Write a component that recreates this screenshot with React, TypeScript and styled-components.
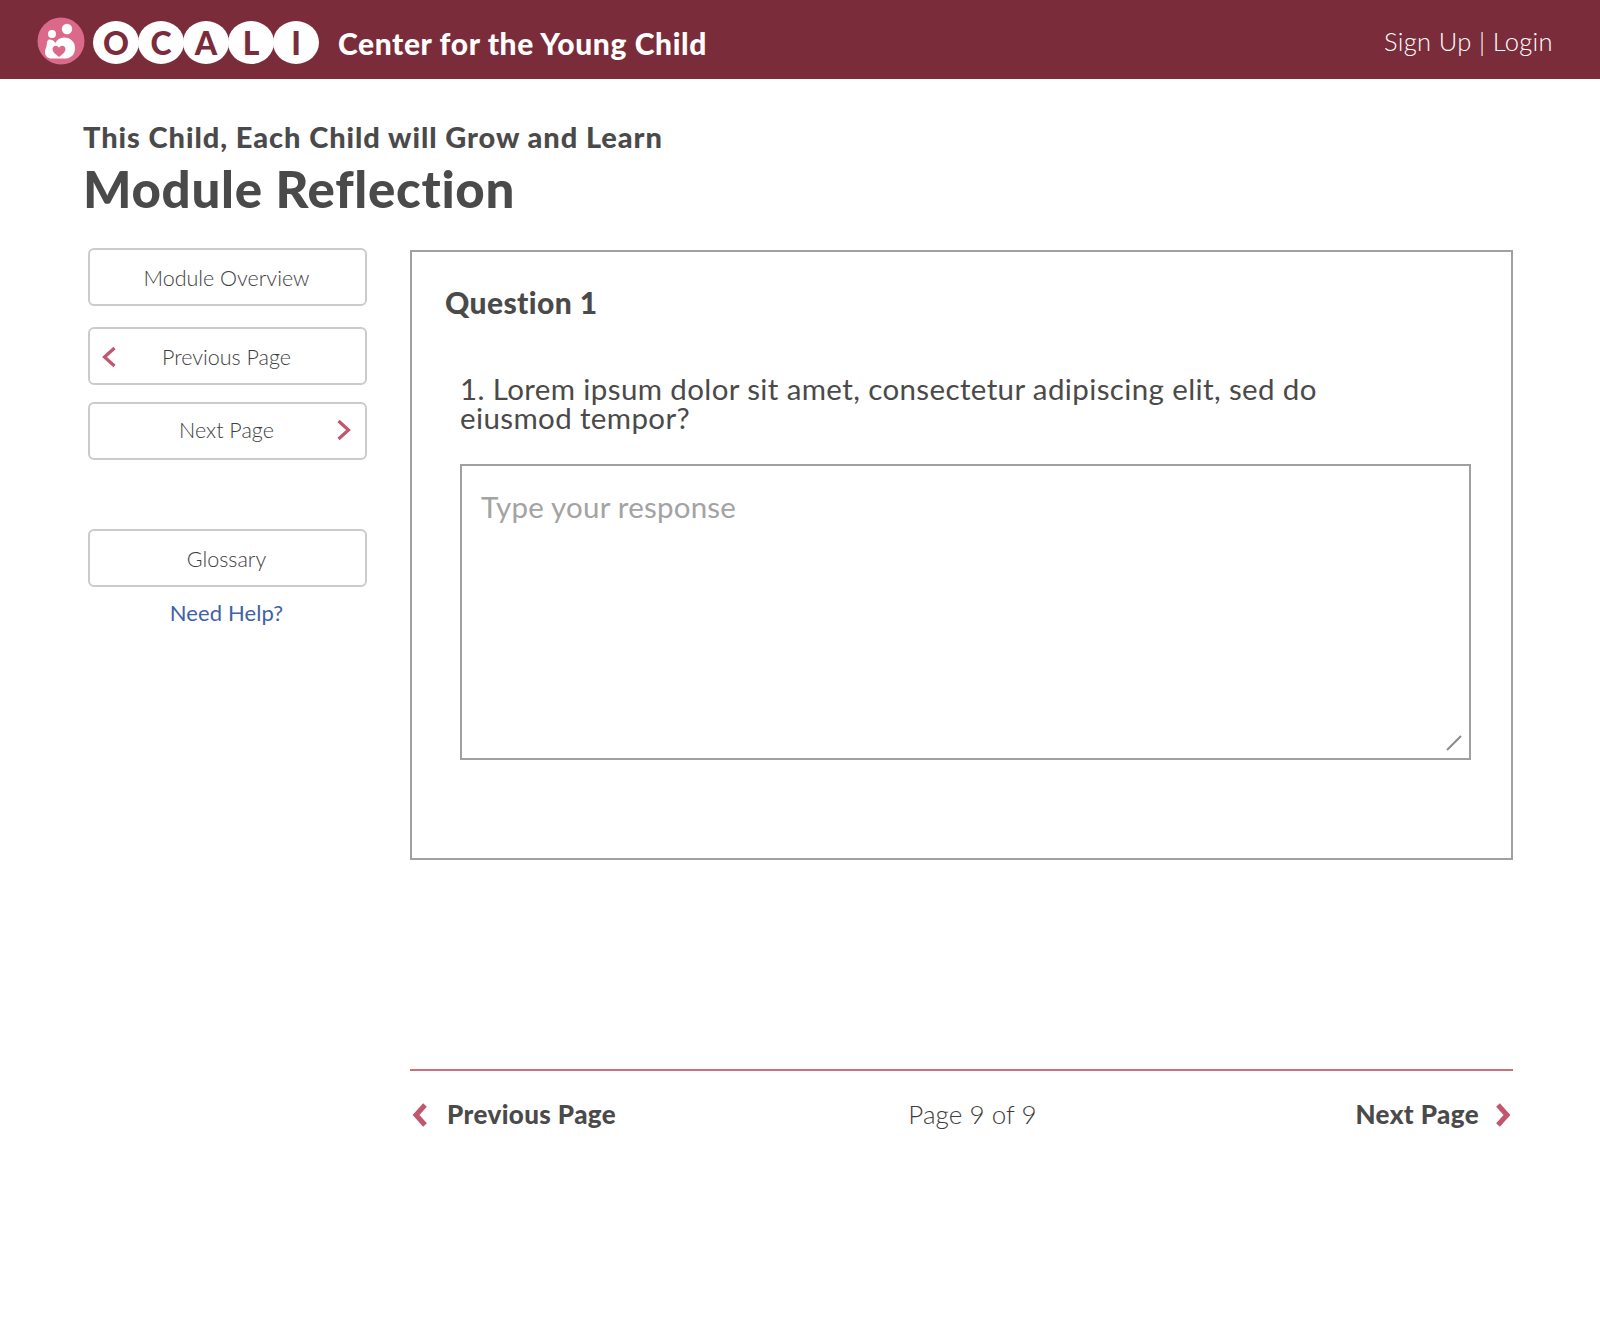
import React from 'react';
import styled, { createGlobalStyle } from 'styled-components';

const LETTERS = ['O', 'C', 'A', 'L', 'I'];
const FONT = 'Lato, "Open Sans", sans-serif';

const GlobalStyle = createGlobalStyle`
  html, body {
    margin: 0;
    padding: 0;
    background: #fff;
    font-family: ${FONT};
    font-variant-ligatures: none;
    color: #4a4a4a;
  }
`;

const Page = styled.div`
  width: 1600px;
  height: 1331px;
  overflow: hidden;
`;

const Header = styled.header`
  height: 79px;
  background: #7b2c3a;
  display: flex;
  align-items: center;
  padding: 0 47px 0 37px;
  color: #fff;
`;

const LogoBadge = styled.svg`
  width: 48px;
  height: 48px;
  margin: 3px 8px 0 0;
  flex: none;
`;

const LogoLetters = styled.div`
  display: flex;
  margin: 5px 19px 0 0;
`;

const LogoLetter = styled.span`
  width: 46px;
  height: 43px;
  border-radius: 50%;
  background: #fff;
  color: #7b2c3a;
  font-size: 32px;
  line-height: 43px;
  font-weight: 900;
  text-align: center;
  flex: none;
  & + & {
    margin-left: -1px;
  }
`;

const HeaderTitle = styled.div`
  font-size: 30px;
  font-weight: 900;
  letter-spacing: 0.6px;
  margin-top: 6px;
  flex: 1;
`;

const HeaderLinks = styled.div`
  font-size: 25.5px;
  font-weight: 300;
  letter-spacing: 0.35px;
  margin-top: 2px;
`;

const Titles = styled.div`
  padding: 40px 0 0 83px;
`;

const Eyebrow = styled.h2`
  margin: 0;
  font-size: 29px;
  line-height: 36px;
  font-weight: 900;
  letter-spacing: 0.92px;
  color: #4a4a4a;
`;

const PageTitle = styled.h1`
  margin: 2px 0 0;
  font-size: 51px;
  line-height: 64px;
  font-weight: 900;
  letter-spacing: 0.7px;
  color: #4a4a4a;
`;

const Body = styled.div`
  display: grid;
  grid-template-columns: 279px 1103px;
  column-gap: 43px;
  padding: 27px 0 0 88px;
`;

const Sidebar = styled.nav`
  display: flex;
  flex-direction: column;
`;

const SideButton = styled.a<{ $gap?: number; $lift?: boolean }>`
  position: relative;
  height: 58px;
  box-sizing: border-box;
  margin-top: ${(p) => p.$gap ?? 0}px;
  padding: 2px 2px ${(p) => (p.$lift ? 4 : 0)}px 0;
  border: 2px solid #cbcbcb;
  border-radius: 6px;
  display: flex;
  align-items: center;
  justify-content: center;
  font-size: 21.5px;
  font-weight: 300;
  letter-spacing: 0;
  color: #3d3d3d;
`;

const SideChevron = styled.svg<{ $side: 'left' | 'right' }>`
  position: absolute;
  ${(p) => (p.$side === 'left' ? 'top: 17px; left: 11px;' : 'top: 15px; right: 13px;')}
  width: 16px;
  height: 22px;
`;

const HelpLink = styled.a`
  margin-top: 12px;
  padding-right: 2px;
  text-align: center;
  font-size: 22px;
  font-weight: 400;
  letter-spacing: 0.1px;
  color: #3f62a6;
`;

const Content = styled.main`
  padding-top: 2px;
`;

const Panel = styled.section`
  height: 610px;
  box-sizing: border-box;
  border: 2px solid #a0a0a0;
  padding: 32px 40px 0 33px;
`;

const QuestionTitle = styled.h3`
  margin: 0;
  font-size: 30px;
  line-height: 36px;
  font-weight: 900;
  letter-spacing: 0.4px;
  color: #4a4a4a;
`;

const QuestionText = styled.p`
  margin: 54px 0 0 15px;
  font-size: 29.5px;
  line-height: 29px;
  font-weight: 400;
  letter-spacing: 0.38px;
  color: #4a4a4a;
`;

const ResponseBox = styled.div`
  position: relative;
  height: 296px;
  box-sizing: border-box;
  margin: 32px 0 0 15px;
  border: 2px solid #a0a0a0;
  padding: 23px 19px;
  font-size: 29.5px;
  line-height: 36px;
  font-weight: 400;
  letter-spacing: 0.22px;
  color: #a3a3a3;
`;

const ResizeGrip = styled.svg`
  position: absolute;
  right: 7px;
  bottom: 7px;
  width: 16px;
  height: 16px;
`;

const Pager = styled.div`
  margin-top: 209px;
  border-top: 2px solid #cb6f7e;
  padding-top: 25px;
  display: grid;
  grid-template-columns: 1fr auto 1fr;
  align-items: center;
`;

const PagerLink = styled.a<{ $end?: boolean }>`
  display: flex;
  align-items: center;
  justify-content: ${(p) => (p.$end ? 'flex-end' : 'flex-start')};
  gap: ${(p) => (p.$end ? 14 : 17)}px;
  font-size: 26px;
  line-height: 36px;
  font-weight: 900;
  letter-spacing: 0.4px;
  color: #4a4a4a;
`;

const PagerChevron = styled.svg`
  width: 20px;
  height: 26px;
  flex: none;
  margin-top: 2px;
`;

const PageCount = styled.div`
  font-size: 26px;
  font-weight: 300;
  letter-spacing: 0.05px;
  color: #3d3d3d;
  margin-left: 22px;
`;

function LogoMark() {
  return (
    <LogoBadge viewBox="0 0 48 48">
      <circle cx="24" cy="24" r="23.5" fill="#db6a8a" />
      <circle cx="30" cy="12" r="5.2" fill="#fff" />
      <circle cx="15" cy="17" r="4" fill="#fff" />
      <path d="M12 22.5c3 0 5 1.2 6.4 3.4 1.6-3.2 4.8-5.4 8.6-5.4 6.6 0 11 4.4 11 10.5 0 6.2-3.6 10-9 10.5H15c-4.4 0-7-2.4-7-6.5 0-2.8 1.4-4.4 1.6-6.2.2-2 .6-6.3 2.4-6.3Z" fill="#fff" />
      <path d="M22 40c-4-2.9-6.5-5-6.5-7.9 0-2 1.5-3.4 3.3-3.4 1.4 0 2.5.9 3.2 2.1.7-1.2 1.8-2.1 3.2-2.1 1.8 0 3.3 1.4 3.3 3.4 0 2.9-2.5 5-6.5 7.9Z" fill="#db6a8a" />
    </LogoBadge>
  );
}

function SideChevronIcon({ side }: { side: 'left' | 'right' }) {
  return (
    <SideChevron $side={side} viewBox="0 0 16 22">
      <path
        d={side === 'left' ? 'M13.5 2 3.5 11l10 9' : 'M2.5 2l10 9-10 9'}
        fill="none"
        stroke="#c1566c"
        strokeWidth="3.2"
      />
    </SideChevron>
  );
}

function PagerChevronIcon({ side }: { side: 'left' | 'right' }) {
  return (
    <PagerChevron viewBox="0 0 20 26">
      <path
        d={side === 'left' ? 'M15 3 6 13l9 10' : 'M5 3l9 10-9 10'}
        fill="none"
        stroke="#c1566c"
        strokeWidth="5"
      />
    </PagerChevron>
  );
}

export default function App() {
  return (
    <Page>
      <GlobalStyle />
      <Header>
        <LogoMark />
        <LogoLetters>
          {LETTERS.map((letter) => (
            <LogoLetter key={letter}>{letter}</LogoLetter>
          ))}
        </LogoLetters>
        <HeaderTitle>Center for the Young Child</HeaderTitle>
        <HeaderLinks>Sign Up | Login</HeaderLinks>
      </Header>

      <Titles>
        <Eyebrow>This Child, Each Child will Grow and Learn</Eyebrow>
        <PageTitle>Module Reflection</PageTitle>
      </Titles>

      <Body>
        <Sidebar>
          <SideButton>Module Overview</SideButton>
          <SideButton $gap={21}>
            <SideChevronIcon side="left" />
            Previous Page
          </SideButton>
          <SideButton $gap={17} $lift>
            Next Page
            <SideChevronIcon side="right" />
          </SideButton>
          <SideButton $gap={69}>Glossary</SideButton>
          <HelpLink>Need Help?</HelpLink>
        </Sidebar>

        <Content>
          <Panel>
            <QuestionTitle>Question 1</QuestionTitle>
            <QuestionText>
              1. Lorem ipsum dolor sit amet, consectetur adipiscing elit, sed do
              <br />
              eiusmod tempor?
            </QuestionText>
            <ResponseBox>
              Type your response
              <ResizeGrip viewBox="0 0 16 16">
                <path d="M1 15 15 1" stroke="#8a8a8a" strokeWidth="2" />
              </ResizeGrip>
            </ResponseBox>
          </Panel>

          <Pager>
            <PagerLink>
              <PagerChevronIcon side="left" />
              Previous Page
            </PagerLink>
            <PageCount>Page 9 of 9</PageCount>
            <PagerLink $end>
              Next Page
              <PagerChevronIcon side="right" />
            </PagerLink>
          </Pager>
        </Content>
      </Body>
    </Page>
  );
}
